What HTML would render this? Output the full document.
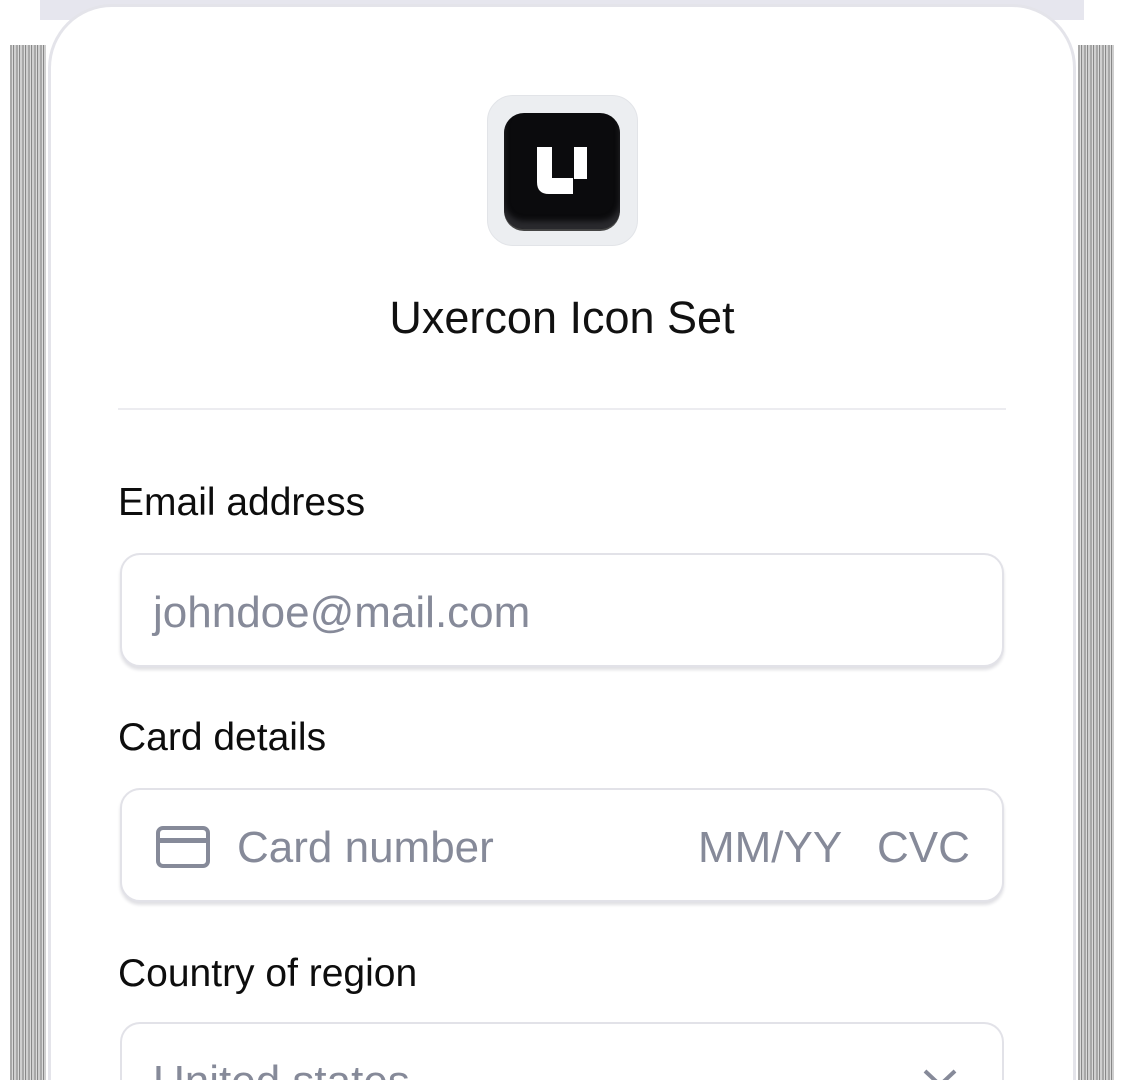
<!DOCTYPE html>
<html><head><style>
*{margin:0;padding:0;box-sizing:border-box}
html,body{width:1124px;height:1080px;overflow:hidden}
body{background:#fff;position:relative;font-family:"Liberation Sans",sans-serif}
.sh{position:absolute;top:45px;bottom:0;width:36px;background:repeating-linear-gradient(90deg,#a8a8a8 0 2px,#dadada 2px 3px,#888 3px 4px,#cfcfcf 4px 6px)}
.top{position:absolute;left:40px;right:40px;top:0;height:20px;background:#e6e6ee}
.card{position:absolute;left:48px;top:4px;width:1028px;height:1076px;background:#fff;border:3px solid #e4e4ea;border-bottom:none;border-radius:64px 64px 0 0;}
.abs{position:absolute}
.logo{left:487px;top:95px;width:151px;height:151px;background:#eceef1;border-radius:26px;border:1px solid #e2e4e8}
.inner{left:504px;top:113px;width:116px;height:116px;background:#0b0b0d;border-radius:20px;box-shadow:inset 0 -8px 6px #2a2a2e, 0 2px 0 #444}
.title{left:0;width:1124px;top:292px;text-align:center;font-size:45px;color:#111}
.div{left:118px;width:888px;top:408px;height:2px;background:#ececf0}
.lbl{left:118px;font-size:39px;color:#0d0d0d}
.inp{left:120px;width:884px;height:114px;border:2px solid #e2e2e8;border-radius:20px;box-shadow:0 3px 3px #e0e0e4;background:#fff;overflow:hidden}
.last{height:58px;border-bottom:none;border-radius:20px 20px 0 0;box-shadow:none}
.ph{font-size:44px;color:#868a99;white-space:nowrap}
</style></head><body>
<div class="top"></div>
<div class="sh" style="left:10px"></div>
<div class="sh" style="left:1078px"></div>
<div class="card"></div>
<div class="abs logo"></div>
<div class="abs inner"></div>
<svg class="abs" style="left:537px;top:147px" width="51" height="47" viewBox="0 0 51 47">
<path d="M0 0H15V31H36V47H12Q0 47 0 35Z" fill="#fff"/><path d="M37 0H50V32H37Z" fill="#fff"/></svg>
<div class="abs title">Uxercon Icon Set</div>
<div class="abs div"></div>
<div class="abs lbl" style="top:481px">Email address</div>
<div class="abs inp" style="top:553px"><span class="abs ph" style="left:31px;top:33px">johndoe@mail.com</span></div>
<div class="abs lbl" style="top:716px">Card details</div>
<div class="abs inp" style="top:788px">
<svg class="abs" style="left:34px;top:36px" width="54" height="42" viewBox="0 0 54 42"><rect x="2" y="2" width="50" height="38" rx="5" fill="none" stroke="#868a99" stroke-width="4"/><rect x="2" y="12" width="50" height="5" fill="#868a99"/></svg>
<span class="abs ph" style="left:115px;top:33px">Card number</span>
<span class="abs ph" style="left:576px;top:33px">MM/YY</span>
<span class="abs ph" style="left:755px;top:33px">CVC</span></div>
<div class="abs lbl" style="top:952px">Country of region</div>
<div class="abs inp last" style="top:1022px"><span class="abs ph" style="left:31px;top:33px">United states</span>
<svg class="abs" style="left:800px;top:44px" width="36" height="14" viewBox="0 0 36 14"><path d="M3 3L18 17L33 3" fill="none" stroke="#868a99" stroke-width="4"/></svg></div>
</body></html>
